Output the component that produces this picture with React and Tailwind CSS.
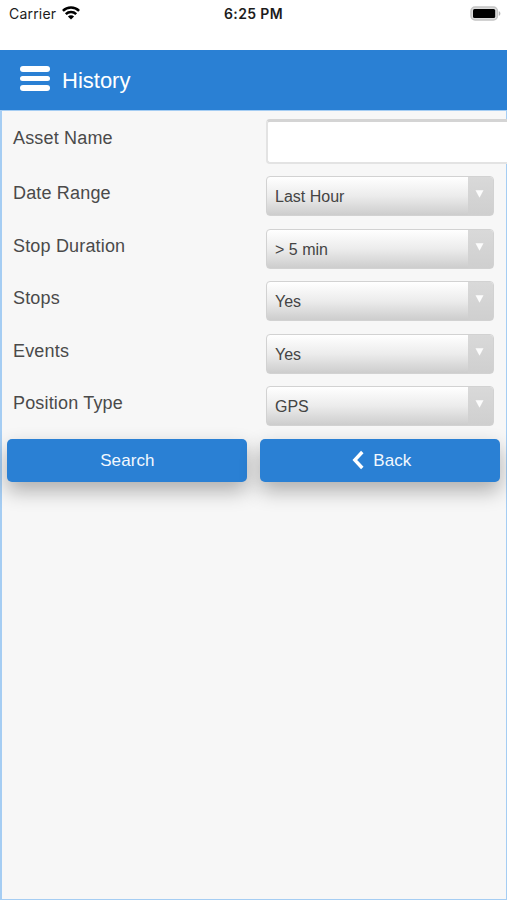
import { useState } from 'react';

const fields = [
  { label: 'Date Range', value: 'Last Hour' },
  { label: 'Stop Duration', value: '> 5 min' },
  { label: 'Stops', value: 'Yes' },
  { label: 'Events', value: 'Yes' },
  { label: 'Position Type', value: 'GPS' },
];

const WifiIcon = () => (
  <svg width="18" height="14" viewBox="0 0 18 14" className="ml-[6px] mb-[2px]">
    <g fill="none" stroke="#000" strokeWidth="2.5">
      <path d="M0.9 4.9a11.5 11.5 0 0 1 16.2 0" />
      <path d="M3.8 8.1a7.4 7.4 0 0 1 10.4 0" />
    </g>
    <path d="M9 13.6 5.9 10.5a4.4 4.4 0 0 1 6.2 0z" fill="#000" />
  </svg>
);

const BatteryIcon = () => (
  <svg width="31" height="15" viewBox="0 0 31 15">
    <rect x="1" y="1" width="26.4" height="13" rx="4" fill="#dcdcdc" stroke="#c4c4c4" strokeWidth="1.5" />
    <rect x="3" y="3" width="22.2" height="9" rx="1.5" fill="#000" />
    <path d="M28.8 5.2c2.1.7 2.1 3.9 0 4.6z" fill="#b4b4b4" />
  </svg>
);

const StatusBar = () => (
  <div className="grid h-[50px] shrink-0 grid-cols-3 items-start bg-white text-[#1c1c1c]">
    <div className="flex h-[27px] items-center pl-[9px] font-[Inter,sans-serif] text-[14px]">
      <span className="tracking-[0.2px]">Carrier</span>
      <WifiIcon />
    </div>
    <div className="h-[27px] text-center font-[Inter,sans-serif] text-[14px] leading-[27px] font-semibold tracking-[0.35px]">
      6:25 PM
    </div>
    <div className="flex h-[26px] items-center justify-end pr-[6px]">
      <BatteryIcon />
    </div>
  </div>
);

const SelectBox = ({ value }) => (
  <button
    type="button"
    className="flex h-[40px] w-[228px] overflow-hidden rounded-[4px] border border-[#d2d2d2] bg-linear-to-b from-white via-[#ececec] to-[#cdcdcd] text-left"
  >
    <span className="flex-1 pl-[8px] text-[16px] leading-[39px] text-[#444]">{value}</span>
    <span className="flex w-[25px] justify-center self-stretch bg-linear-to-b from-[#d9d9d9] to-[#cfcfcf] pt-[13px] pr-[3px]">
      <svg width="9" height="8" viewBox="0 0 9 8">
        <path d="M0.5 0.2h8L4.5 7.8z" fill="#fcfcfc" />
      </svg>
    </span>
  </button>
);

const App = () => {
  const [assetName, setAssetName] = useState('');

  return (
    <div className="flex h-[900px] w-full flex-col overflow-hidden bg-white font-['Liberation_Sans',Arial,sans-serif]">
      <StatusBar />

      {/* Title bar */}
      <header className="flex h-[60px] shrink-0 items-center bg-[#2a80d4] pl-[19.5px] text-white">
        <div className="flex w-[30px] flex-col gap-[4px] pb-[3px]">
          <div className="h-[5.6px] rounded-full bg-white" />
          <div className="h-[5.6px] rounded-full bg-white" />
          <div className="h-[5.6px] rounded-full bg-white" />
        </div>
        <h1 className="ml-[12.5px] pt-px text-[22px] leading-[60px]">History</h1>
      </header>

      {/* Search form */}
      <main className="min-h-0 flex-1 border border-l-2 border-[#a5cdf3] bg-[#f7f7f7]">
        <div className="flex h-[59px] pt-[8px]">
          <label className="w-[264px] shrink-0 pl-[11px] text-[18px] leading-[38px] tracking-[0.17px] text-[#4a4a4a]">
            Asset Name
          </label>
          <input
            value={assetName}
            onChange={(e) => setAssetName(e.target.value)}
            className="-mr-[2px] h-[45px] min-w-0 flex-1 rounded-l-[4px] border-2 border-t-[3px] border-r-0 border-[#e3e3e3] border-t-[#d4d4d4] bg-white px-2 outline-none"
          />
        </div>

        {fields.map((field) => (
          <div key={field.label} className="flex h-[52.6px] pt-[6px]">
            <label className="w-[264px] shrink-0 pl-[11px] text-[18px] leading-[35px] tracking-[0.17px] text-[#4a4a4a]">
              {field.label}
            </label>
            <SelectBox value={field.value} />
          </div>
        ))}

        {/* Actions */}
        <div className="mt-[5.6px] flex gap-[13px] pl-[5.4px] text-[17px] text-[#f2f8fe]">
          <button
            type="button"
            className="h-[43px] w-[240px] rounded-[5px] bg-[#2a80d4] pt-px tracking-[0.1px] shadow-[0_9px_20px_rgba(0,0,0,0.3)]"
          >
            Search
          </button>
          <button
            type="button"
            className="flex h-[43px] w-[240px] items-center justify-center gap-[9px] rounded-[5px] bg-[#2a80d4] tracking-[0.1px] shadow-[0_9px_20px_rgba(0,0,0,0.3)]"
          >
            <svg width="12" height="20" viewBox="0 0 12 20" className="ml-[3px]">
              <path d="M10.3 2 2.8 10l7.5 8" fill="none" stroke="#fff" strokeWidth="3.4" />
            </svg>
            <span className="pt-px">Back</span>
          </button>
        </div>
      </main>
    </div>
  );
};

export default App;
